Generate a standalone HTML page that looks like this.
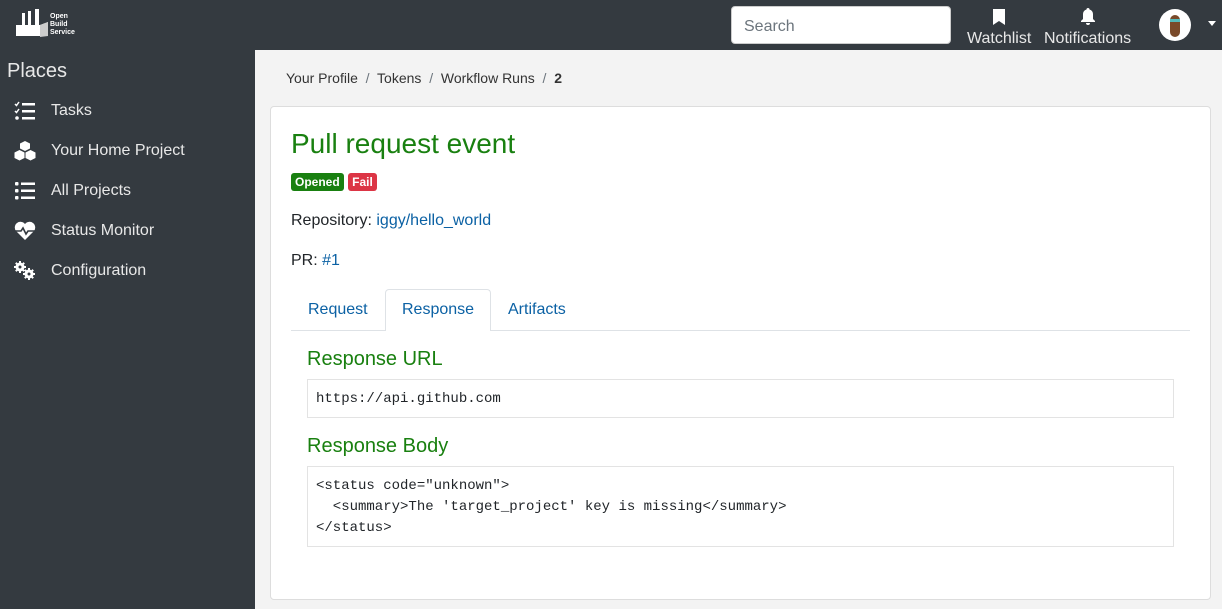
<!DOCTYPE html>
<html><head><style>
*{box-sizing:border-box;margin:0;padding:0}
body{width:1222px;height:609px;overflow:hidden;font-family:"Liberation Sans",sans-serif;background:#f3f3f3;position:relative;color:#212529}
.top{position:absolute;left:0;top:0;width:1222px;height:50px;background:#343a40}
.side{position:absolute;left:0;top:50px;width:255px;height:559px;background:#343a40;color:#e8e8e8}
.side h4{font-weight:400;font-size:20px;position:absolute;left:7px;top:10px}
.item{position:absolute;left:14px;font-size:16px;height:20px;display:flex;align-items:center}
.item svg{width:22px;height:20px;margin-right:15px}
.search{position:absolute;left:731px;top:6px;width:220px;height:38px;background:#fff;border-radius:4px;border:1px solid #ccc;font-size:16px;color:#6c757d;padding:11px 12px 0}
.nav{position:absolute;top:30px;color:#e8e8e8;font-size:16px}
.card{position:absolute;left:270px;top:106px;width:941px;height:494px;background:#fff;border:1px solid #ddd;border-radius:4px}
a{color:#0b61a4;text-decoration:none}
.g{color:#198010}
pre{font-family:"Liberation Mono",monospace;font-size:14px;background:#fff;border:1px solid #e3e3e3;padding:9px 8px;line-height:21px}
.badge{display:inline-block;font-size:12px;font-weight:700;color:#fff;padding:2px 4px;border-radius:3px;line-height:14px}
</style></head><body>
<div class="top">
<svg style="position:absolute;left:16px;top:8px" width="64" height="30" viewBox="0 0 64 30"><g fill="#fff"><rect x="6" y="5" width="3" height="12"/><rect x="12" y="3" width="3" height="14"/><rect x="19" y="1" width="4" height="16"/><path d="M0 17h24l8-3v14H0z"/><path d="M24 17l8-3v14l-8 1z" fill="#ccc"/></g><text x="34" y="10" font-size="7" font-weight="700" fill="#fff" font-family="Liberation Sans">Open</text><text x="34" y="18" font-size="7" font-weight="700" fill="#fff" font-family="Liberation Sans">Build</text><text x="34" y="26" font-size="7" font-weight="700" fill="#fff" font-family="Liberation Sans">Service</text></svg>
<div class="search">Search</div>
<svg style="position:absolute;left:993px;top:9px" width="12" height="16"><path d="M0 0h12v16l-6-4-6 4z" fill="#fff"/></svg>
<div class="nav" style="left:967px">Watchlist</div>
<svg style="position:absolute;left:1080px;top:8px" width="16" height="17"><path d="M8 0a1.5 1.5 0 0 1 1.5 1.5A5 5 0 0 1 13 6v5l2 2v1H1v-1l2-2V6a5 5 0 0 1 3.5-4.5A1.5 1.5 0 0 1 8 0zM6 15h4a2 2 0 0 1-4 0z" fill="#fff"/></svg>
<div class="nav" style="left:1044px">Notifications</div>
<div style="position:absolute;left:1159px;top:9px;width:32px;height:32px;border-radius:50%;background:#fff"><div style="position:absolute;left:11px;top:6px;width:10px;height:22px;border-radius:5px;background:#7a4a2a"></div><div style="position:absolute;left:11px;top:10px;width:10px;height:3px;background:#5bb"></div></div>
<div style="position:absolute;left:1208px;top:21px;border:4px solid transparent;border-top:5px solid #fff;border-bottom:0"></div>
</div>
<div class="side">
<h4>Places</h4>
<div class="item" style="top:51px"><svg viewBox="0 0 22 20" fill="#fff"><path d="M1 3l1.5 1.5L5 1" stroke="#fff" stroke-width="1.5" fill="none"/><path d="M1 10l1.5 1.5L5 8" stroke="#fff" stroke-width="1.5" fill="none"/><circle cx="3" cy="17" r="1.8"/><rect x="8" y="2" width="13" height="2.5"/><rect x="8" y="9" width="13" height="2.5"/><rect x="8" y="16" width="13" height="2.5"/></svg>Tasks</div>
<div class="item" style="top:91px"><svg viewBox="0 0 22 20" fill="#fff"><path d="M11 0l5 2.5v5l-5 2.5-5-2.5v-5z"/><path d="M5.5 9l5 2.5v5.5l-5 2.5-5-2.5v-5.5z"/><path d="M16.5 9l5 2.5v5.5l-5 2.5-5-2.5v-5.5z"/></svg>Your Home Project</div>
<div class="item" style="top:131px"><svg viewBox="0 0 22 20" fill="#fff"><rect x="1" y="1" width="3.5" height="3.5" rx="1"/><rect x="1" y="8" width="3.5" height="3.5" rx="1"/><rect x="1" y="15" width="3.5" height="3.5" rx="1"/><rect x="7" y="1.5" width="14" height="2.5"/><rect x="7" y="8.5" width="14" height="2.5"/><rect x="7" y="15.5" width="14" height="2.5"/></svg>All Projects</div>
<div class="item" style="top:171px"><svg viewBox="0 0 22 20" fill="#fff"><path d="M11 19L2 10A5 5 0 0 1 11 3a5 5 0 0 1 9 7z"/><path d="M1 10h6l2-3 3 6 2-3h7" stroke="#343a40" stroke-width="1.6" fill="none"/></svg>Status Monitor</div>
<div class="item" style="top:211px"><svg viewBox="0 0 22 20" fill="#fff"><circle cx="6" cy="6" r="4.5"/><circle cx="15" cy="13" r="4.5"/><path d="M6 0v12M0 6h12M1.8 1.8l8.4 8.4M10.2 1.8l-8.4 8.4" stroke="#fff" stroke-width="2"/><path d="M15 7v12M9 13h12M10.8 8.8l8.4 8.4M19.2 8.8l-8.4 8.4" stroke="#fff" stroke-width="2"/><circle cx="6" cy="6" r="1.5" fill="#343a40"/><circle cx="15" cy="13" r="1.5" fill="#343a40"/></svg>Configuration</div>
</div>
<div style="position:absolute;left:286px;top:70px;font-size:14px;color:#333">Your Profile &nbsp;<span style="color:#6c757d">/</span>&nbsp; Tokens &nbsp;<span style="color:#6c757d">/</span>&nbsp; Workflow Runs &nbsp;<span style="color:#6c757d">/</span>&nbsp; <b>2</b></div>
<div class="card">
<div class="g" style="position:absolute;left:20px;top:21px;font-size:28px">Pull request event</div>
<div style="position:absolute;left:20px;top:66px"><span class="badge" style="background:#198010">Opened</span> <span class="badge" style="background:#dc3545">Fail</span></div>
<div style="position:absolute;left:20px;top:105px;font-size:16px">Repository: <a>iggy/hello_world</a></div>
<div style="position:absolute;left:20px;top:145px;font-size:16px">PR: <a>#1</a></div>
<div style="position:absolute;left:20px;top:223px;width:899px;border-bottom:1px solid #dee2e6"></div>
<div style="position:absolute;left:37px;top:194px;font-size:16px"><a>Request</a></div>
<div style="position:absolute;left:114px;top:182px;width:106px;height:42px;background:#fff;border:1px solid #dee2e6;border-bottom:none;border-radius:4px 4px 0 0;font-size:16px;padding:11px 0 0 16px"><a>Response</a></div>
<div style="position:absolute;left:237px;top:194px;font-size:16px"><a>Artifacts</a></div>
<div class="g" style="position:absolute;left:36px;top:241px;font-size:20px">Response URL</div>
<pre style="position:absolute;left:36px;top:272px;width:867px;height:39px">https://api.github.com</pre>
<div class="g" style="position:absolute;left:36px;top:328px;font-size:20px">Response Body</div>
<pre style="position:absolute;left:36px;top:359px;width:867px;height:81px">&lt;status code="unknown"&gt;
  &lt;summary&gt;The 'target_project' key is missing&lt;/summary&gt;
&lt;/status&gt;</pre>
</div>
</body></html>
